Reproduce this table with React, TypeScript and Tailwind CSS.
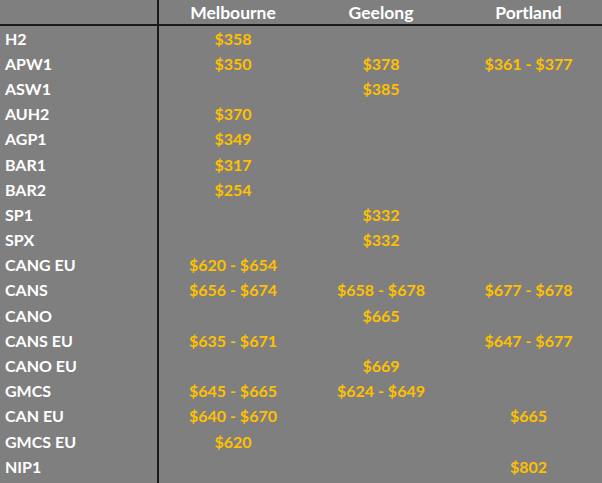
const rows: [string, string, string, string][] = [
  ['H2', '$358', '', ''],
  ['APW1', '$350', '$378', '$361 - $377'],
  ['ASW1', '', '$385', ''],
  ['AUH2', '$370', '', ''],
  ['AGP1', '$349', '', ''],
  ['BAR1', '$317', '', ''],
  ['BAR2', '$254', '', ''],
  ['SP1', '', '$332', ''],
  ['SPX', '', '$332', ''],
  ['CANG EU', '$620 - $654', '', ''],
  ['CANS', '$656 - $674', '$658 - $678', '$677 - $678'],
  ['CANO', '', '$665', ''],
  ['CANS EU', '$635 - $671', '', '$647 - $677'],
  ['CANO EU', '', '$669', ''],
  ['GMCS', '$645 - $665', '$624 - $649', ''],
  ['CAN EU', '$640 - $670', '', '$665'],
  ['GMCS EU', '$620', '', ''],
  ['NIP1', '', '', '$802'],
];

export default function App() {
  return (
    <div className="w-[602px] h-[483px] bg-[#7f7f7f] font-['Lato','Open_Sans',sans-serif] font-bold text-[16px] overflow-hidden flex flex-col">
      {/* Header */}
      <div className="grid grid-cols-[159px_148px_148px_147px] h-[26px] shrink-0 border-b-2 border-[#1a1a1a] text-white text-[17.5px]">
        <div className="border-r-2 border-[#1a1a1a]"></div>
        <div className="flex items-center justify-center">Melbourne</div>
        <div className="flex items-center justify-center">Geelong</div>
        <div className="flex items-center justify-center">Portland</div>
      </div>

      {/* Body */}
      {rows.map(([name, mel, gee, port]) => (
        <div key={name} className="grid grid-cols-[159px_148px_148px_147px] h-[25.2px] shrink-0">
          <div className="border-r-2 border-[#1a1a1a] flex items-center pl-[5px] text-white">{name}</div>
          <div className="flex items-center justify-center text-[#ffc000]">{mel}</div>
          <div className="flex items-center justify-center text-[#ffc000]">{gee}</div>
          <div className="flex items-center justify-center text-[#ffc000]">{port}</div>
        </div>
      ))}
      <div className="w-[159px] flex-1 border-r-2 border-[#1a1a1a]"></div>
    </div>
  );
}
